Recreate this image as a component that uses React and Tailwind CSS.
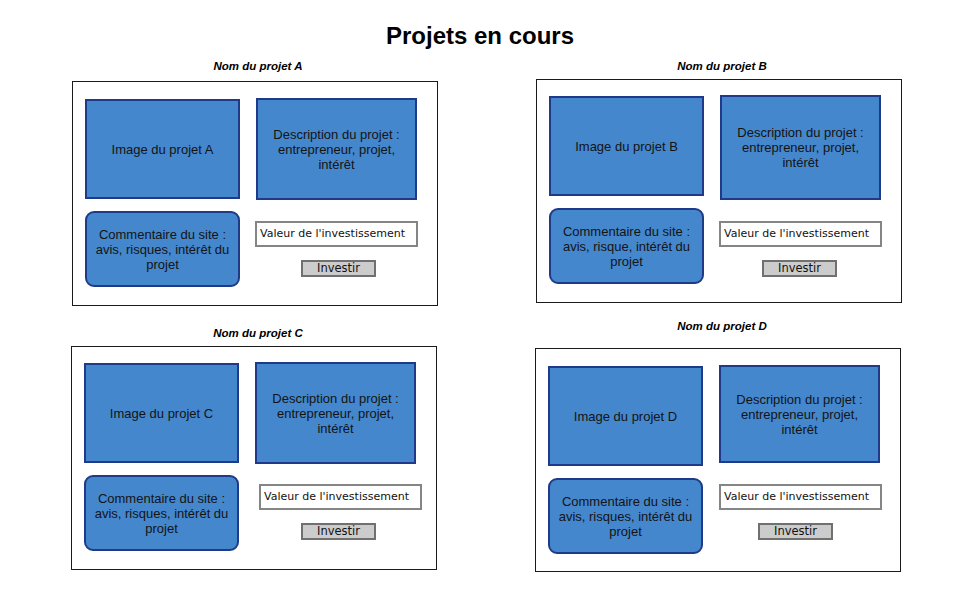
import React from 'react';

const projects = [
  {
    letter: 'A',
    comment: 'Commentaire du site : avis, risques, intérêt du projet',
    titleCls: '',
    boxCls: 'mt-[8px] h-[225px] ml-0',
    padCls: 'pt-[17px]',
    descCls: 'h-[102px]',
    inputCls: 'mt-[21px] -ml-px',
    btnCls: 'ml-[45px]',
  },
  {
    letter: 'B',
    comment: 'Commentaire du site : avis, risque, intérêt du projet',
    titleCls: '',
    boxCls: 'mt-[6px] h-[224px] ml-0',
    padCls: 'pt-[16px]',
    descCls: 'h-[105px]',
    inputCls: 'mt-[21px] -ml-px',
    btnCls: 'ml-[42px]',
  },
  {
    letter: 'C',
    comment: 'Commentaire du site : avis, risques, intérêt du projet',
    titleCls: 'mt-[7px]',
    boxCls: 'mt-[6px] h-[224px] -ml-px',
    padCls: 'pt-[16px]',
    descCls: 'h-[102px]',
    inputCls: 'mt-[20px] ml-[4px]',
    btnCls: 'ml-[46px]',
  },
  {
    letter: 'D',
    comment: 'Commentaire du site : avis, risques, intérêt du projet',
    titleCls: '',
    boxCls: 'mt-[15px] h-[224px] -ml-px',
    padCls: 'pt-[17px]',
    descCls: 'h-[98px]',
    inputCls: 'mt-[21px] ml-0',
    btnCls: 'ml-[39px]',
  },
];

const ProjectCard = ({ p }) => (
  <div className="flex flex-col w-[366px]">
    <div className={`pl-[6px] text-center text-[11.5px] leading-[14px] font-bold italic text-black font-['Liberation_Sans',Arial,sans-serif] ${p.titleCls}`}>
      Nom du projet {p.letter}
    </div>
    <div className={`w-[366px] border border-[#1a1a1a] bg-white flex gap-[16px] pl-[12px] ${p.boxCls} ${p.padCls}`}>
      {/* colonne gauche : image + commentaire */}
      <div className="flex flex-col gap-[12px] w-[155px]">
        <div className="h-[100px] bg-[#4487cc] border-2 border-[#1f3a88] flex items-center justify-center text-[13px] leading-[15px] text-[#141414]">
          Image du projet {p.letter}
        </div>
        <div className="h-[76px] bg-[#4487cc] border-2 border-[#1f3a88] rounded-[9px] flex items-center justify-center px-[6px] text-center text-[13px] leading-[15px] text-[#141414]">
          {p.comment}
        </div>
      </div>
      {/* colonne droite : description, valeur, bouton */}
      <div className="flex flex-col w-[163px]">
        <div className={`-mt-px w-[161px] bg-[#4487cc] border-2 border-[#1f3a88] flex items-center justify-center px-[10px] text-center text-[13px] leading-[15px] text-[#141414] ${p.descCls}`}>
          Description du projet : entrepreneur, projet, intérêt
        </div>
        <div className={`w-[163px] h-[26px] shrink-0 border-2 border-[#858585] bg-white flex items-center pl-[3px] text-[11px] text-[#111] whitespace-nowrap font-['Comic_Sans_MS','DejaVu_Sans',sans-serif] ${p.inputCls}`}>
          Valeur de l'investissement
        </div>
        <div className={`mt-[13px] w-[75px] h-[17px] shrink-0 border-2 border-[#707070] bg-[#cccccc] flex items-center justify-center text-[11.5px] leading-none text-[#111] font-['Comic_Sans_MS','DejaVu_Sans',sans-serif] ${p.btnCls}`}>
          Investir
        </div>
      </div>
    </div>
  </div>
);

export default function App() {
  return (
    <div className="w-[960px] h-[600px] bg-white overflow-hidden font-['Liberation_Sans',Arial,sans-serif]">
      <h1 className="pt-[22px] text-center text-[24px] leading-[28px] font-bold text-black">
        Projets en cours
      </h1>
      <div className="mt-[9px] flex flex-col gap-[13px]">
        <div className="flex gap-[98px] pl-[72px] h-[247px] items-start">
          <ProjectCard p={projects[0]} />
          <ProjectCard p={projects[1]} />
        </div>
        <div className="flex gap-[98px] pl-[72px] items-start">
          <ProjectCard p={projects[2]} />
          <ProjectCard p={projects[3]} />
        </div>
      </div>
    </div>
  );
}
